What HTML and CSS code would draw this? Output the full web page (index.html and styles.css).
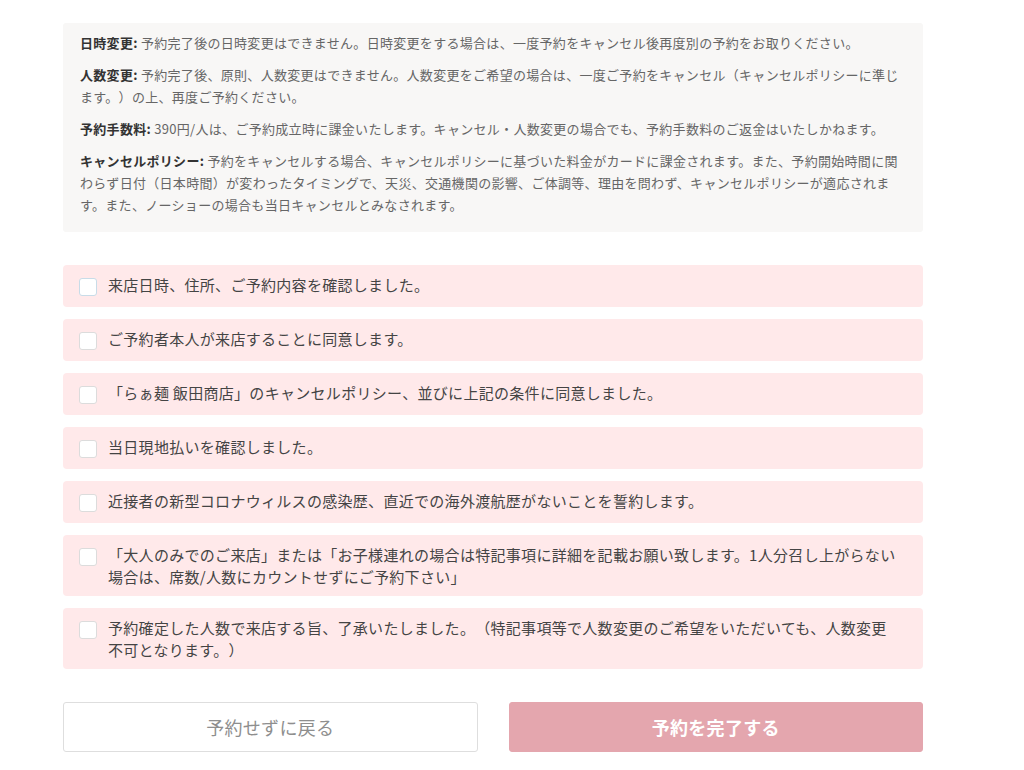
FILE: index.html
```html
<html>

<head>
    <meta charset="utf-8">
    <title>予約内容の確認</title>
    <link rel="stylesheet" href="styles.css">
</head>

<body>
    <div class="wrap">
        <div class="notice">
            <p><b>日時変更:</b> 予約完了後の日時変更はできません。日時変更をする場合は、一度予約をキャンセル後再度別の予約をお取りください。</p>
            <p><b>人数変更:</b> 予約完了後、原則、人数変更はできません。人数変更をご希望の場合は、一度ご予約をキャンセル（キャンセルポリシーに準じます。）の上、再度ご予約ください。</p>
            <p><b>予約手数料:</b> 390円/人は、ご予約成立時に課金いたします。キャンセル・人数変更の場合でも、予約手数料のご返金はいたしかねます。</p>
            <p><b>キャンセルポリシー:</b> 予約をキャンセルする場合、キャンセルポリシーに基づいた料金がカードに課金されます。また、予約開始時間に関わらず日付（日本時間）が変わったタイミングで、天災、交通機関の影響、ご体調等、理由を問わず、キャンセルポリシーが適応されます。また、ノーショーの場合も当日キャンセルとみなされます。</p>
        </div>

        <div class="checks">
            <label class="check"><span class="box first"></span><span class="txt">来店日時、住所、ご予約内容を確認しました。</span></label>
            <label class="check"><span class="box"></span><span class="txt">ご予約者本人が来店することに同意します。</span></label>
            <label class="check"><span class="box"></span><span class="txt">「らぁ麺 飯田商店」のキャンセルポリシー、並びに上記の条件に同意しました。</span></label>
            <label class="check"><span class="box"></span><span class="txt">当日現地払いを確認しました。</span></label>
            <label class="check"><span class="box"></span><span class="txt">近接者の新型コロナウィルスの感染歴、直近での海外渡航歴がないことを誓約します。</span></label>
            <label class="check"><span class="box"></span><span class="txt">「大人のみでのご来店」または「お子様連れの場合は特記事項に詳細を記載お願い致します。1人分召し上がらない場合は、席数/人数にカウントせずにご予約下さい」</span></label>
            <label class="check"><span class="box"></span><span class="txt">予約確定した人数で来店する旨、了承いたしました。（特記事項等で人数変更のご希望をいただいても、人数変更不可となります。）</span></label>
        </div>

        <div class="buttons">
            <button class="btn back">予約せずに戻る</button>
            <button class="btn done">予約を完了する</button>
        </div>
    </div>
</body>

</html>
```

FILE: styles.css
```css
* {
    box-sizing: border-box;
}

body {
    margin: 0px;
    background-color: white;
    font-family: "Noto Sans CJK JP", "Noto Sans", sans-serif;
    color: #444;
    text-spacing-trim: space-all;
}

.wrap {
    width: 860px;
    margin-left: 63px;
    padding-top: 23px;
}

.notice {
    background-color: #f8f7f6;
    border-radius: 3px;
    padding: 9px 17px 16px 17px;
    font-size: 13px;
    line-height: 22px;
    letter-spacing: 0.3px;
    color: #666;
}

.notice p {
    margin: 0px 0px 10px 0px;
}

.notice p:last-child {
    margin-bottom: 0px;
}

.notice b {
    color: #333;
}

.checks {
    margin-top: 33px;
    display: flex;
    flex-direction: column;
    gap: 12px;
}

.check {
    display: flex;
    align-items: flex-start;
    background-color: #ffe9ea;
    border-radius: 4px;
    min-height: 42px;
    padding: 9px 22px 8px 16px;
    font-size: 15px;
    line-height: 22px;
    letter-spacing: 0.3px;
    color: #444;
}

.box {
    flex: none;
    width: 18px;
    height: 18px;
    margin-top: 4px;
    margin-right: 11px;
    background-color: white;
    border: 1px solid #dcdcdc;
    border-radius: 3px;
}

.box.first {
    border-color: #c8dce8;
}

.buttons {
    margin-top: 33px;
    display: flex;
    gap: 31px;
}

.btn {
    flex: 1;
    height: 50px;
    border-radius: 3px;
    font-family: "Noto Sans CJK JP", "Noto Sans", sans-serif;
    font-size: 18px;
    letter-spacing: 0.3px;
}

.back {
    background-color: white;
    border: 1px solid #dedede;
    color: #8e8e8e;
}

.done {
    background-color: #e4a6ae;
    border: 1px solid #e4a6ae;
    color: white;
    font-weight: bold;
}
```
